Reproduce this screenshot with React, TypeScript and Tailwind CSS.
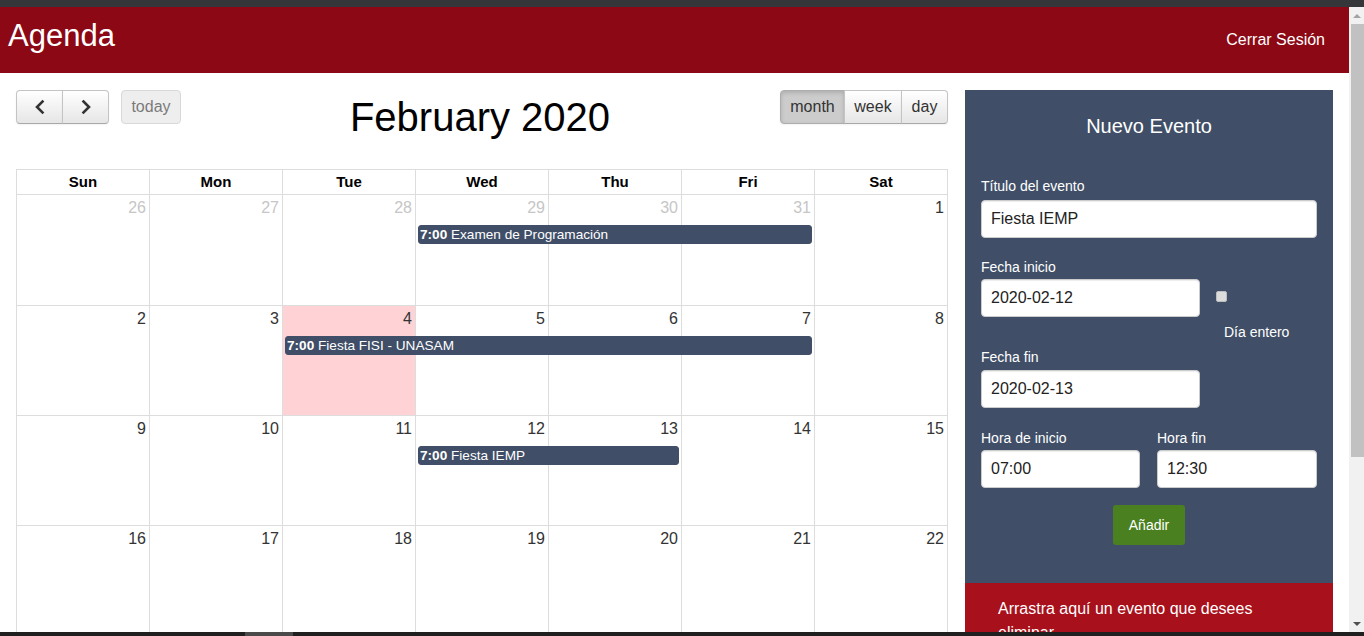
import React from 'react';

type Day = { d: number; other?: boolean; today?: boolean };
type Ev = { start: string; span: string; time: string; title: string };

const colStarts = ['col-start-1', 'col-start-2', 'col-start-3', 'col-start-4', 'col-start-5', 'col-start-6', 'col-start-7'];

// only the rows that fit in the window are drawn
const weeks: { days: Day[]; events: Ev[]; h: string }[] = [
  {
    h: 'h-[111px]',
    days: [{ d: 26, other: true }, { d: 27, other: true }, { d: 28, other: true }, { d: 29, other: true }, { d: 30, other: true }, { d: 31, other: true }, { d: 1 }],
    events: [{ start: 'col-start-4', span: 'col-span-3', time: '7:00', title: 'Examen de Programación' }],
  },
  {
    h: 'h-[110px]',
    days: [{ d: 2 }, { d: 3 }, { d: 4, today: true }, { d: 5 }, { d: 6 }, { d: 7 }, { d: 8 }],
    events: [{ start: 'col-start-3', span: 'col-span-4', time: '7:00', title: 'Fiesta FISI - UNASAM' }],
  },
  {
    h: 'h-[110px]',
    days: [{ d: 9 }, { d: 10 }, { d: 11 }, { d: 12 }, { d: 13 }, { d: 14 }, { d: 15 }],
    events: [{ start: 'col-start-4', span: 'col-span-2', time: '7:00', title: 'Fiesta IEMP' }],
  },
  {
    h: 'h-[110px]',
    days: [{ d: 16 }, { d: 17 }, { d: 18 }, { d: 19 }, { d: 20 }, { d: 21 }, { d: 22 }],
    events: [],
  },
];

const dayNames = ['Sun', 'Mon', 'Tue', 'Wed', 'Thu', 'Fri', 'Sat'];

const btn =
  'h-[34px] border border-[#c4c4c4] border-b-[#a8a8a8] text-[#333] text-[16px] flex items-center justify-center bg-linear-to-b from-white to-[#e6e6e6] shadow-[inset_0_1px_0_rgba(255,255,255,0.2),0_1px_2px_rgba(0,0,0,0.05)]';

const inputCls =
  'h-[38px] bg-white border border-[#ccc] rounded-[4px] pl-[9px] text-[16px] text-[#222] shadow-[inset_0_1px_1px_rgba(0,0,0,0.075)] outline-none';

const Chevron = ({ dir }: { dir: 'left' | 'right' }) => (
  <svg width="12" height="16" viewBox="0 0 12 16" fill="none">
    <path
      d={dir === 'left' ? 'M8.5 2.5 L3 8 L8.5 13.5' : 'M3.5 2.5 L9 8 L3.5 13.5'}
      stroke="#333"
      strokeWidth="2.6"
      strokeLinecap="square"
    />
  </svg>
);

const Calendar = () => (
  <div className="w-[932px] shrink-0">
    {/* Toolbar */}
    <div className="grid grid-cols-[1fr_auto_1fr] items-start h-[79px]">
      <div className="flex items-start">
        <button className={`${btn} w-[47px] rounded-l-[4px]`}>
          <Chevron dir="left" />
        </button>
        <button className={`${btn} w-[47px] -ml-px rounded-r-[4px]`}>
          <Chevron dir="right" />
        </button>
        <button className="h-[34px] w-[60px] ml-[12px] rounded-[4px] border border-[#c4c4c4] bg-[#e6e6e6] opacity-65 text-[#333] text-[16px]">
          today
        </button>
      </div>
      <h2 className="text-[40px] leading-[44px] mt-[5px] text-black -translate-x-[2px]">February 2020</h2>
      <div className="flex justify-end">
        <button className="h-[34px] w-[65px] rounded-l-[4px] border border-[#adadad] bg-[#ccc] text-[#333] text-[16px] shadow-[inset_0_2px_4px_rgba(0,0,0,0.15),0_1px_2px_rgba(0,0,0,0.05)]">
          month
        </button>
        <button className={`${btn} w-[58px] -ml-px`}>week</button>
        <button className={`${btn} w-[47px] -ml-px rounded-r-[4px]`}>day</button>
      </div>
    </div>

    {/* Grid */}
    <div className="border-l border-t border-[#ddd]">
      <div className="grid grid-cols-7">
        {dayNames.map(n => (
          <div key={n} className="h-[25px] border-r border-b border-[#ddd] text-center font-bold text-[15px] leading-[24px] text-black">
            {n}
          </div>
        ))}
      </div>
      {weeks.map((w, wi) => (
        <div key={wi} className={`grid grid-cols-7 grid-rows-[30px_19px_1fr] ${w.h}`}>
          {w.days.map((day, di) => (
            <div
              key={di}
              className={`${colStarts[di]} row-start-1 row-span-3 border-r border-b border-[#ddd] text-right pr-[3px] pt-[3px] text-[16px] leading-[20px] ${
                day.today ? 'bg-[#ffd3d5]' : 'bg-white'
              } ${day.other ? 'text-[#c6c6c6]' : 'text-[#333]'}`}
            >
              {day.d}
            </div>
          ))}
          {w.events.map((e, ei) => (
            <div
              key={ei}
              className={`${e.start} ${e.span} row-start-2 relative z-10 ml-[2px] mr-[3px] bg-[#404f67] border border-[#404f67] rounded-[3px] text-white text-[13.6px] leading-[17px] px-[1px] whitespace-nowrap overflow-hidden`}
            >
              <span className="font-bold">{e.time}</span> {e.title}
            </div>
          ))}
        </div>
      ))}
    </div>
  </div>
);

const Sidebar = () => (
  <div className="w-[368px] ml-[17px] shrink-0 flex flex-col">
    <div className="bg-[#404f67] h-[493px] px-[16px] pt-[22px] text-white">
      <h3 className="text-center text-[20px] leading-[28px]">Nuevo Evento</h3>

      <div className="mt-[36px]">
        <label className="block text-[14px] leading-[20px] mb-[4px]">Título del evento</label>
        <input className={`${inputCls} w-full`} defaultValue="Fiesta IEMP" />
      </div>

      <div className="mt-[19px]">
        <label className="block text-[14px] leading-[20px] mb-[2px]">Fecha inicio</label>
        <div className="flex items-start">
          <input className={`${inputCls} w-[219px]`} defaultValue="2020-02-12" />
          <div className="ml-[16px] pt-[12px] flex flex-col">
            <div className="w-[11px] h-[11px] rounded-[2px] bg-[#dcdcdc] border border-[#bdbdbd]" />
            <span className="ml-[8px] mt-[20px] text-[14px] leading-[20px]">Día entero</span>
          </div>
        </div>
      </div>

      <div className="mt-[5px]">
        <label className="block text-[14px] leading-[20px] mb-[3px]">Fecha fin</label>
        <input className={`${inputCls} w-[219px]`} defaultValue="2020-02-13" />
      </div>

      <div className="mt-[20px] flex gap-[17px]">
        <div className="w-[159px]">
          <label className="block text-[14px] leading-[20px] mb-[2px]">Hora de inicio</label>
          <input className={`${inputCls} w-full`} defaultValue="07:00" />
        </div>
        <div className="w-[160px]">
          <label className="block text-[14px] leading-[20px] mb-[2px]">Hora fin</label>
          <input className={`${inputCls} w-full`} defaultValue="12:30" />
        </div>
      </div>

      <button className="block mx-auto mt-[17px] w-[72px] h-[40px] rounded-[3px] bg-[#4a801f] text-white text-[14px]">
        Añadir
      </button>
    </div>
    <div className="bg-[#a8101b] px-[33px] pt-[14px] h-[200px] text-white text-[16px] leading-[24px]">
      Arrastra aquí un evento que desees eliminar
    </div>
  </div>
);

const Scrollbar = () => (
  <div className="w-[15px] shrink-0 bg-[#f1f1f1] flex flex-col">
    <div className="h-[17px] flex items-center justify-center">
      <div className="w-0 h-0 border-l-[4px] border-r-[4px] border-b-[4px] border-l-transparent border-r-transparent border-b-[#a3a3a3]" />
    </div>
    <div className="h-[433px] ml-[2px] bg-[#c1c1c1]" />
    <div className="flex-1" />
    <div className="h-[17px] flex items-center justify-center">
      <div className="w-0 h-0 border-l-[4px] border-r-[4px] border-t-[4px] border-l-transparent border-r-transparent border-t-[#505050]" />
    </div>
  </div>
);

export default function App() {
  return (
    <div className="w-[1364px] h-[636px] overflow-hidden flex flex-col bg-white font-['Liberation_Sans',Arial,sans-serif]">
      <div className="h-[7px] bg-[#35363a] shrink-0" />
      <div className="flex-1 flex min-h-0">
        <div className="flex-1 flex flex-col overflow-hidden">
          <header className="h-[66px] shrink-0 bg-[#8b0814] flex items-start justify-between pl-[8px] pr-[24px]">
            <h1 className="text-white text-[31px] leading-[36px] mt-[11px]">Agenda</h1>
            <a className="text-white text-[16px] leading-[20px] mt-[23px]">Cerrar Sesión</a>
          </header>
          <div className="flex pl-[16px] pt-[17px]">
            <Calendar />
            <Sidebar />
          </div>
        </div>
        <Scrollbar />
      </div>
      <div className="h-[4px] shrink-0 flex bg-[#1f1f1f]">
        <div className="w-[245px]" />
        <div className="w-[48px] bg-[#4a4a4a]" />
      </div>
    </div>
  );
}
